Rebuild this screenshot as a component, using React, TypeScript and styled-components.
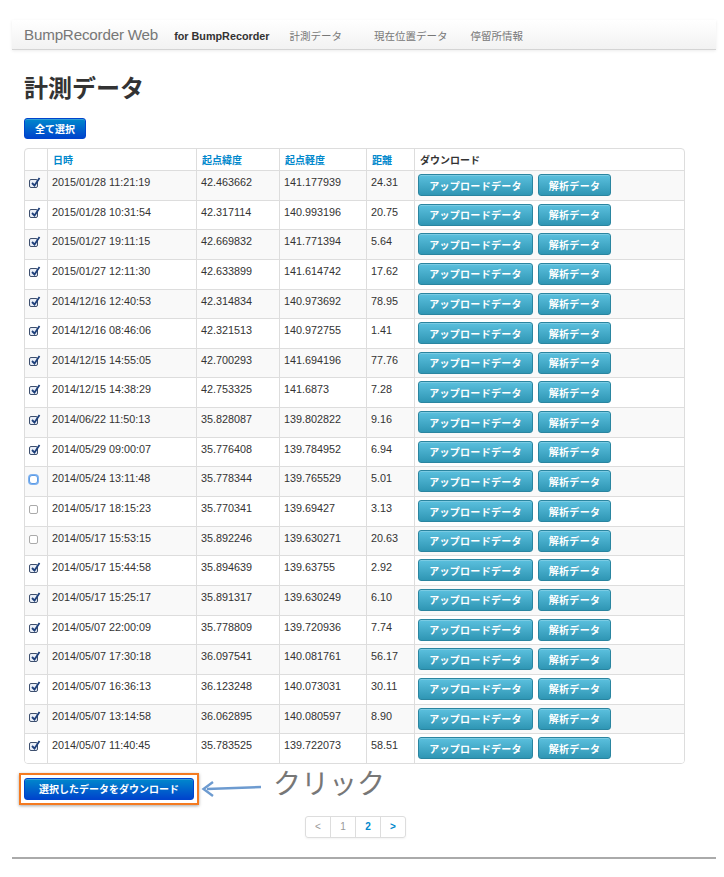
import styled, { createGlobalStyle } from "styled-components";

const GlobalStyle = createGlobalStyle`
  html, body {
    margin: 0;
    padding: 0;
    background: #fff;
  }
  body {
    font-family: "Liberation Sans", "Noto Sans CJK JP", sans-serif;
    color: #333;
    font-size: 11px;
  }
`;

const Page = styled.div`
  width: 724px;
  padding: 20px 0 0;
`;

const Navbar = styled.div`
  margin: 0 8px 0 12px;
  height: 29px;
  display: flex;
  align-items: center;
  background: linear-gradient(to bottom, #ffffff, #f2f2f2);
  border-bottom: 1px solid #d4d4d4;
  box-shadow: 0 1px 3px rgba(0, 0, 0, 0.08);
`;

const Brand = styled.span`
  font-size: 15.2px;
  color: #777;
  margin-left: 12px;
  letter-spacing: -0.2px;
`;

const BrandSub = styled.span`
  font-size: 10.8px;
  font-weight: bold;
  color: #333;
  margin-left: 16px;
  margin-top: 3px;
`;

const NavLink = styled.span<{ $gap: number }>`
  font-size: 10.5px;
  color: #777;
  margin-left: ${(p) => p.$gap}px;
  margin-top: 2px;
`;

const Container = styled.div`
  padding: 0 39px 0 24px;
`;

const Title = styled.h1`
  margin: 24px 0 14px;
  font-size: 24px;
  line-height: 30px;
  font-weight: bold;
  color: #333;
`;

const PrimaryButton = styled.button`
  display: inline-flex;
  align-items: center;
  justify-content: center;
  height: 21px;
  padding: 0 10px;
  font-family: inherit;
  font-size: 10px;
  font-weight: bold;
  color: #fff;
  background: linear-gradient(to bottom, #0088cc, #0044cc);
  border: 1px solid #0044cc;
  border-radius: 3px;
  box-shadow: inset 0 1px 0 rgba(255, 255, 255, 0.2);
  cursor: pointer;
`;

const Table = styled.table`
  margin-top: 9px;
  width: 661px;
  border-collapse: separate;
  border-spacing: 0;
  table-layout: fixed;
  border: 1px solid #ddd;
  border-radius: 4px;
  overflow: hidden;
`;

const HeadCell = styled.th<{ $w: number; $link?: boolean }>`
  width: ${(p) => p.$w}px;
  height: 21px;
  padding: 0 5px;
  text-align: left;
  font-size: 10px;
  font-weight: bold;
  color: ${(p) => (p.$link ? "#0088cc" : "#333")};
  border-left: 1px solid #ddd;
  box-sizing: border-box;
  &:first-child {
    border-left: none;
  }
`;

const Row = styled.tr<{ $striped: boolean }>`
  height: 29.65px;
  background: ${(p) => (p.$striped ? "#f9f9f9" : "#fff")};
`;

const Cell = styled.td`
  padding: 5px 4px 0;
  vertical-align: top;
  border-top: 1px solid #ddd;
  border-left: 1px solid #ddd;
  font-size: 10.8px;
  color: #333;
  white-space: nowrap;
  box-sizing: border-box;
  &:first-child {
    border-left: none;
    padding: 8px 0 0 4px;
  }
`;

const ButtonCell = styled(Cell)`
  padding: 3px 3px 0;
`;

const Check = styled.span<{ $checked: boolean; $focus?: boolean }>`
  display: block;
  position: relative;
  width: 9px;
  height: 9px;
  box-sizing: border-box;
  border: 1px solid ${(p) => (p.$focus ? "#5b9be6" : p.$checked ? "#3d4f6e" : "#aaa")};
  border-radius: ${(p) => (p.$focus ? "3px" : "2px")};
  background: ${(p) => (p.$checked ? "#e9eef7" : "#fff")};
  box-shadow: ${(p) => (p.$focus ? "0 0 0 1px #7fb2ef" : "none")};
  svg {
    position: absolute;
    left: 0;
    top: -3px;
  }
`;

const InfoButton = styled.button<{ $w: number }>`
  width: ${(p) => p.$w}px;
  height: 22px;
  margin-right: 5px;
  padding: 0;
  font-family: inherit;
  font-size: 10px;
  font-weight: bold;
  color: #fff;
  letter-spacing: 0.3px;
  background: linear-gradient(to bottom, #5bc0de, #2f96b4);
  border: 1px solid #2a85a0;
  border-radius: 3px;
  box-shadow: inset 0 1px 0 rgba(255, 255, 255, 0.2);
  cursor: pointer;
`;

const ActionRow = styled.div`
  display: flex;
  align-items: center;
  margin-top: 9px;
`;

const Highlight = styled.div`
  padding: 3px;
  margin-left: -5px;
  border: 2px solid #f47a20;
  background: #fff;
  box-shadow: 0 1px 3px rgba(0, 0, 0, 0.35);
`;

const DownloadButton = styled(PrimaryButton)`
  width: 170px;
  height: 22px;
`;

const ClickLabel = styled.span`
  font-size: 28px;
  color: #777;
  margin-left: 10px;
  margin-top: -14px;
`;

const Pagination = styled.ul`
  display: flex;
  width: max-content;
  margin: 11px 0 0 281px;
  padding: 0;
  list-style: none;
  border: 1px solid #ddd;
  border-radius: 3px;
  box-shadow: 0 1px 2px rgba(0, 0, 0, 0.05);
`;

const PageItem = styled.li<{ $active?: boolean }>`
  width: 24px;
  height: 20px;
  display: flex;
  align-items: center;
  justify-content: center;
  font-size: 10px;
  color: ${(p) => (p.$active ? "#0088cc" : "#999")};
  font-weight: ${(p) => (p.$active ? "bold" : "normal")};
  border-left: 1px solid #ddd;
  &:first-child {
    border-left: none;
  }
`;

const Footer = styled.hr`
  margin: 19px 8px 0 12px;
  border: none;
  height: 2px;
  background: #aaa;
`;

const rows: [string, string, string, string, boolean][] = [
  ["2015/01/28 11:21:19", "42.463662", "141.177939", "24.31", true],
  ["2015/01/28 10:31:54", "42.317114", "140.993196", "20.75", true],
  ["2015/01/27 19:11:15", "42.669832", "141.771394", "5.64", true],
  ["2015/01/27 12:11:30", "42.633899", "141.614742", "17.62", true],
  ["2014/12/16 12:40:53", "42.314834", "140.973692", "78.95", true],
  ["2014/12/16 08:46:06", "42.321513", "140.972755", "1.41", true],
  ["2014/12/15 14:55:05", "42.700293", "141.694196", "77.76", true],
  ["2014/12/15 14:38:29", "42.753325", "141.6873", "7.28", true],
  ["2014/06/22 11:50:13", "35.828087", "139.802822", "9.16", true],
  ["2014/05/29 09:00:07", "35.776408", "139.784952", "6.94", true],
  ["2014/05/24 13:11:48", "35.778344", "139.765529", "5.01", false],
  ["2014/05/17 18:15:23", "35.770341", "139.69427", "3.13", false],
  ["2014/05/17 15:53:15", "35.892246", "139.630271", "20.63", false],
  ["2014/05/17 15:44:58", "35.894639", "139.63755", "2.92", true],
  ["2014/05/17 15:25:17", "35.891317", "139.630249", "6.10", true],
  ["2014/05/07 22:00:09", "35.778809", "139.720936", "7.74", true],
  ["2014/05/07 17:30:18", "36.097541", "140.081761", "56.17", true],
  ["2014/05/07 16:36:13", "36.123248", "140.073031", "30.11", true],
  ["2014/05/07 13:14:58", "36.062895", "140.080597", "8.90", true],
  ["2014/05/07 11:40:45", "35.783525", "139.722073", "58.51", true],
];

function CheckMark() {
  return (
    <svg width="11" height="11" viewBox="0 0 11 11">
      <path d="M2 6 L4.5 8.5 L9.5 1" fill="none" stroke="#1d3f7a" strokeWidth="1.8" />
    </svg>
  );
}

function Arrow() {
  return (
    <svg width="62" height="20" viewBox="0 0 62 20" style={{ marginLeft: 2 }}>
      <line x1="60" y1="8" x2="6" y2="10" stroke="#6d9bd0" strokeWidth="2.4" />
      <path d="M12 3 L2.5 10 L12 17" fill="none" stroke="#6d9bd0" strokeWidth="2.4" />
    </svg>
  );
}

export default function App() {
  return (
    <Page>
      <GlobalStyle />
      <Navbar>
        <Brand>BumpRecorder Web</Brand>
        <BrandSub>for BumpRecorder</BrandSub>
        <NavLink $gap={20}>計測データ</NavLink>
        <NavLink $gap={32}>現在位置データ</NavLink>
        <NavLink $gap={23}>停留所情報</NavLink>
      </Navbar>
      <Container>
        <Title>計測データ</Title>
        <PrimaryButton>全て選択</PrimaryButton>
        <Table>
          <thead>
            <tr>
              <HeadCell $w={22} />
              <HeadCell $w={149} $link>日時</HeadCell>
              <HeadCell $w={83} $link>起点緯度</HeadCell>
              <HeadCell $w={87} $link>起点軽度</HeadCell>
              <HeadCell $w={48} $link>距離</HeadCell>
              <HeadCell $w={270}>ダウンロード</HeadCell>
            </tr>
          </thead>
          <tbody>
            {rows.map(([date, lat, lng, dist, checked], i) => (
              <Row key={date} $striped={i % 2 === 0}>
                <Cell>
                  <Check $checked={checked} $focus={i === 10}>
                    {checked && <CheckMark />}
                  </Check>
                </Cell>
                <Cell>{date}</Cell>
                <Cell>{lat}</Cell>
                <Cell>{lng}</Cell>
                <Cell>{dist}</Cell>
                <ButtonCell>
                  <InfoButton $w={115}>アップロードデータ</InfoButton>
                  <InfoButton $w={73}>解析データ</InfoButton>
                </ButtonCell>
              </Row>
            ))}
          </tbody>
        </Table>
        <ActionRow>
          <Highlight>
            <DownloadButton>選択したデータをダウンロード</DownloadButton>
          </Highlight>
          <Arrow />
          <ClickLabel>クリック</ClickLabel>
        </ActionRow>
        <Pagination>
          <PageItem>&lt;</PageItem>
          <PageItem>1</PageItem>
          <PageItem $active>2</PageItem>
          <PageItem $active>&gt;</PageItem>
        </Pagination>
      </Container>
      <Footer />
    </Page>
  );
}
